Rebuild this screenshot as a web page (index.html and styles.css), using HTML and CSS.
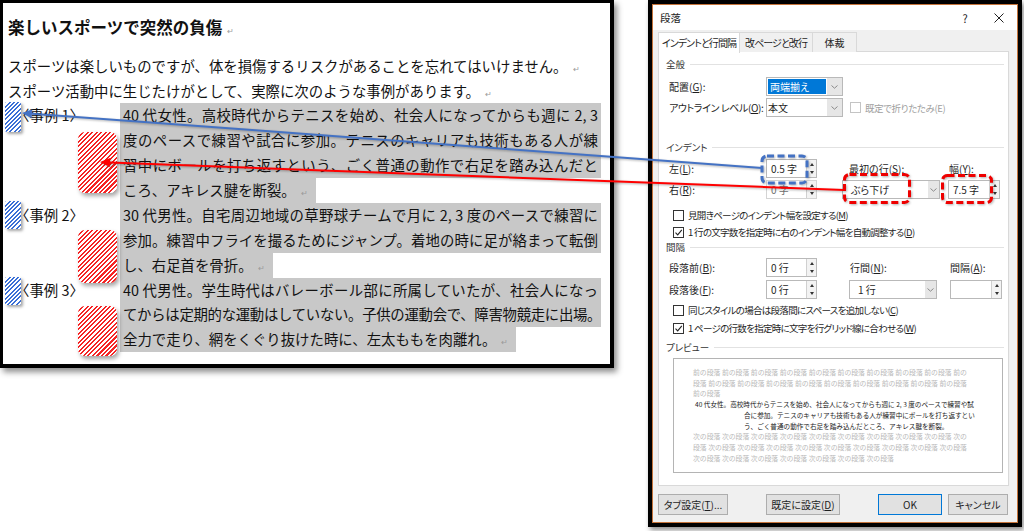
FILE: index.html
```html
<!DOCTYPE html>
<html lang="ja">
<head>
<meta charset="utf-8">
<link rel="stylesheet" href="styles.css">
</head>
<body>
<div class="stage">
  <section class="doc">
    <h1 class="doc-title">楽しいスポーツで突然の負傷<span class="pm">↵</span></h1>
    <p class="doc-line">スポーツは楽しいものですが、体を損傷するリスクがあることを忘れてはいけません。<span class="pm">↵</span></p>
    <p class="doc-line">スポーツ活動中に生じたけがとして、実際に次のような事例があります。<span class="pm">↵</span></p>
    <div class="case">
      <div class="case-label">〈事例 1〉</div>
      <div class="case-body">
        <div class="cl">40 代女性。高校時代からテニスを始め、社会人になってからも週に 2, 3</div>
        <div class="cl">度のペースで練習や試合に参加。テニスのキャリアも技術もある人が練</div>
        <div class="cl">習中にボールを打ち返すという、ごく普通の動作で右足を踏み込んだと</div>
        <div class="cl last">ころ、アキレス腱を断裂。<span class="pm">↵</span></div>
      </div>
    </div>
    <div class="case">
      <div class="case-label">〈事例 2〉</div>
      <div class="case-body">
        <div class="cl">30 代男性。自宅周辺地域の草野球チームで月に 2, 3 度のペースで練習に</div>
        <div class="cl">参加。練習中フライを撮るためにジャンプ。着地の時に足が絡まって転倒</div>
        <div class="cl last">し、右足首を骨折。<span class="pm">↵</span></div>
      </div>
    </div>
    <div class="case">
      <div class="case-label">〈事例 3〉</div>
      <div class="case-body">
        <div class="cl">40 代男性。学生時代はバレーボール部に所属していたが、社会人になっ</div>
        <div class="cl tight">てからは定期的な運動はしていない。子供の運動会で、障害物競走に出場。</div>
        <div class="cl last">全力で走り、網をくぐり抜けた時に、左太ももを肉離れ。<span class="pm">↵</span></div>
      </div>
    </div>
  </section>

  <section class="dialog">
    <div class="dialog-inner">
      <div class="titlebar">
        <span class="title">段落</span>
        <span class="tb-btn">?</span>
        <span class="tb-btn"><svg width="10" height="10" viewBox="0 0 10 10"><path d="M0.5 0.5L9.5 9.5M9.5 0.5L0.5 9.5" stroke="#222" stroke-width="1" fill="none"/></svg></span>
      </div>
      <div class="dbody">
        <div class="tabs">
          <div class="tab tab-active">インデントと行間隔</div>
          <div class="tab tab-2">改ページと改行</div>
          <div class="tab tab-3">体裁</div>
        </div>
        <div class="panel">
          <div class="sec s1">全般</div>
          <div class="row r-align">
            <span class="lbl">配置(<u>G</u>):</span>
            <div class="combo w77"><span class="combo-text"><span class="sel">両端揃え</span></span><span class="combo-arrow"><svg width="7" height="4" viewBox="0 0 7 4"><polyline points="0.5,0.5 3.5,3.2 6.5,0.5" fill="none" stroke="#8a8a8a" stroke-width="1"/></svg></span></div>
          </div>
          <div class="row r-outline">
            <span class="lbl kana">アウトライン レベル(<u>O</u>):</span>
            <div class="combo w77"><span class="combo-text">本文</span><span class="combo-arrow"><svg width="7" height="4" viewBox="0 0 7 4"><polyline points="0.5,0.5 3.5,3.2 6.5,0.5" fill="none" stroke="#8a8a8a" stroke-width="1"/></svg></span></div>
            <span class="cb cb-disabled"></span><span class="cb-text disabled">既定で折りたたみ(E)</span>
          </div>

          <div class="sec s2">インデント</div>
          <div class="row r-left">
            <span class="lbl">左(<u>L</u>):</span>
            <div class="spin"><span class="spin-text">0.5 字</span><span class="spinner"><span class="up"></span><span class="dn"></span></span></div>
            <span class="cell c3">最初の行(<u>S</u>):</span>
            <span class="cell c4">幅(<u>Y</u>):</span>
          </div>
          <div class="row r-right">
            <span class="lbl">右(<u>R</u>):</span>
            <div class="spin spin-dis"><span class="spin-text">0 字</span><span class="spinner"><span class="up"></span><span class="dn"></span></span></div>
            <div class="combo c3"><span class="combo-text pad8">ぶら下げ</span><span class="combo-arrow"><svg width="7" height="4" viewBox="0 0 7 4"><polyline points="0.5,0.5 3.5,3.2 6.5,0.5" fill="none" stroke="#8a8a8a" stroke-width="1"/></svg></span></div>
            <div class="spin c4"><span class="spin-text">7.5 字</span><span class="spinner"><span class="up"></span><span class="dn"></span></span></div>
          </div>
          <div class="cbrow cb-a"><span class="cb"></span><span class="cb-text">見開きページのインデント幅を設定する(<u>M</u>)</span></div>
          <div class="cbrow cb-b"><span class="cb"><svg width="9" height="9" viewBox="0 0 9 9"><polyline points="1.5,4.6 3.7,6.9 7.8,1.8" fill="none" stroke="#222" stroke-width="1.1"/></svg></span><span class="cb-text">1 行の文字数を指定時に右のインデント幅を自動調整する(<u>D</u>)</span></div>

          <div class="sec s3">間隔</div>
          <div class="row r-before">
            <span class="lbl">段落前(<u>B</u>):</span>
            <div class="spin"><span class="spin-text">0 行</span><span class="spinner"><span class="up"></span><span class="dn"></span></span></div>
            <span class="cell c5">行間(<u>N</u>):</span>
            <span class="cell c6">間隔(<u>A</u>):</span>
          </div>
          <div class="row r-after">
            <span class="lbl">段落後(<u>F</u>):</span>
            <div class="spin"><span class="spin-text">0 行</span><span class="spinner"><span class="up"></span><span class="dn"></span></span></div>
            <div class="combo c5"><span class="combo-text pad8">1 行</span><span class="combo-arrow"><svg width="7" height="4" viewBox="0 0 7 4"><polyline points="0.5,0.5 3.5,3.2 6.5,0.5" fill="none" stroke="#8a8a8a" stroke-width="1"/></svg></span></div>
            <div class="spin c6"><span class="spin-text"></span><span class="spinner"><span class="up"></span><span class="dn"></span></span></div>
          </div>
          <div class="cbrow cb-c"><span class="cb"></span><span class="cb-text">同じスタイルの場合は段落間にスペースを追加しない(<u>C</u>)</span></div>
          <div class="cbrow cb-d"><span class="cb"><svg width="9" height="9" viewBox="0 0 9 9"><polyline points="1.5,4.6 3.7,6.9 7.8,1.8" fill="none" stroke="#222" stroke-width="1.1"/></svg></span><span class="cb-text">1 ページの行数を指定時に文字を行グリッド線に合わせる(<u>W</u>)</span></div>

          <div class="sec s4">プレビュー</div>
          <div class="preview">
            <div class="pv-grey">前の段落 前の段落 前の段落 前の段落 前の段落 前の段落 前の段落 前の段落 前の段落 前の</div>
            <div class="pv-grey">段落 前の段落 前の段落 前の段落 前の段落 前の段落 前の段落 前の段落 前の段落 前の段落</div>
            <div class="pv-grey">前の段落</div>
            <div class="pv-main">40 代女性。高校時代からテニスを始め、社会人になってからも週に 2, 3 度のペースで練習や試</div>
            <div class="pv-main pv-hang">合に参加。テニスのキャリアも技術もある人が練習中にボールを打ち返すとい</div>
            <div class="pv-main pv-hang">う、ごく普通の動作で右足を踏み込んだところ、アキレス腱を断裂。</div>
            <div class="pv-grey">次の段落 次の段落 次の段落 次の段落 次の段落 次の段落 次の段落 次の段落 次の段落 次の</div>
            <div class="pv-grey">段落 次の段落 次の段落 次の段落 次の段落 次の段落 次の段落 次の段落 次の段落 次の段落</div>
            <div class="pv-grey">次の段落 次の段落 次の段落 次の段落 次の段落 次の段落 次の段落</div>
          </div>
        </div>
        <div class="buttons">
          <span class="btn b-tab">タブ設定(<u>T</u>)...</span>
          <span class="btn b-def">既定に設定(<u>D</u>)</span>
          <span class="btn b-ok">OK</span>
          <span class="btn b-cancel">キャンセル</span>
        </div>
      </div>
    </div>
  </section>

  <div class="hatch-blue hb1"></div>
  <div class="hatch-blue hb2"></div>
  <div class="hatch-blue hb3"></div>
  <div class="hatch-red hr1"></div>
  <div class="hatch-red hr2"></div>
  <div class="hatch-red hr3"></div>

  <svg class="annot" width="1024" height="531" viewBox="0 0 1024 531">
    <line x1="762" y1="168" x2="32" y2="113.7" stroke="#4472c4" stroke-width="2"/>
    <polygon points="22,113 32.3,109.2 31.6,118.2" fill="#4472c4"/>
    <line x1="844" y1="190" x2="110" y2="162.4" stroke="#ff0000" stroke-width="2"/>
    <polygon points="100,162 110.2,157.9 109.8,166.9" fill="#ff0000"/>
    <rect x="762" y="156" width="45" height="27" rx="5" fill="none" stroke="#4472c4" stroke-width="3" stroke-dasharray="7 3.5"/>
    <rect x="844.5" y="174.5" width="65" height="28" rx="5" fill="none" stroke="#ee0000" stroke-width="3" stroke-dasharray="7 3.5"/>
    <rect x="942.5" y="175.5" width="49" height="27" rx="5" fill="none" stroke="#ee0000" stroke-width="3" stroke-dasharray="7 3.5"/>
  </svg>
</div>
</body>
</html>
```

FILE: styles.css
```css
* { box-sizing: border-box; }
html, body { margin: 0; padding: 0; background: #fff; }
.stage {
  position: relative;
  width: 1024px;
  height: 531px;
  overflow: hidden;
  display: flex;
  align-items: flex-start;
}

/* ---------- document panel ---------- */
.doc {
  flex: none;
  width: 614px;
  height: 368px;
  border: 3px solid #000;
  border-right-width: 4px;
  border-bottom-width: 4px;
  background: #fff;
  box-shadow: 3px 4px 6px rgba(0,0,0,0.45);
  padding: 11px 0 0 5px;
  font-family: "Noto Sans CJK JP", sans-serif;
  color: #111;
}
.doc-title {
  margin: 0 0 14px;
  font-size: 16.5px;
  line-height: 26px;
  font-weight: 700;
}
.doc-line {
  margin: 0;
  font-size: 14.4px;
  line-height: 24.6px;
  white-space: nowrap;
}
.pm {
  font-size: 8px;
  line-height: 0;
  font-weight: 400;
  color: #9a9a9a;
  margin-left: 5px;
}
.case {
  display: grid;
  grid-template-columns: 112px 481px;
  font-size: 14.4px;
  line-height: 24.9px;
}
.case-label { white-space: nowrap; padding-left: 7px; }
.cl {
  padding: 0 3px;
  background: #c8c8c8;
  text-align: justify;
  text-align-last: justify;
}
.cl.last {
  width: fit-content;
  text-align-last: auto;
  padding-right: 8px;
}
.cl.tight { letter-spacing: -0.5px; padding-right: 0; }

/* ---------- hatched markers ---------- */
.hatch-blue {
  position: absolute;
  left: 5px;
  width: 16px;
  border-radius: 2px;
  background: repeating-linear-gradient(135deg, #3a6fd6 0 1.4px, #ffffff 1.4px 3px);
  box-shadow: 2px 2px 3px rgba(0,0,0,0.35);
}
.hb1 { top: 102px; height: 30px; }
.hb2 { top: 201px; height: 28px; }
.hb3 { top: 277px; height: 28px; }
.hatch-red {
  position: absolute;
  left: 78px;
  width: 39px;
  border-radius: 7px;
  background: repeating-linear-gradient(135deg, #f52424 0 1.5px, #ffffff 1.5px 3.2px);
  box-shadow: 2px 3px 4px rgba(0,0,0,0.35);
}
.hr1 { top: 132px; height: 61px; }
.hr2 { top: 230px; height: 53px; }
.hr3 { top: 306px; height: 50px; }

.annot {
  position: absolute;
  left: 0;
  top: 0;
  pointer-events: none;
  filter: drop-shadow(1px 1px 1px rgba(0,0,0,0.3));
}

/* ---------- dialog ---------- */
.dialog {
  flex: none;
  width: 374px;
  height: 527px;
  margin-left: 34px;
  border: 4px solid #000;
  box-shadow: 2px 3px 5px rgba(0,0,0,0.45);
  font-family: "Noto Sans CJK JP", sans-serif;
  font-size: 10px;
  font-feature-settings: "palt" 1;
  font-variant-east-asian: proportional-width;
  color: #1e1e1e;
}
.dialog-inner {
  height: 100%;
  border: 1px solid #c4733a;
  background: #f0f0f0;
  display: flex;
  flex-direction: column;
}
.titlebar {
  height: 25px;
  flex: none;
  background: #fff;
  display: flex;
  align-items: center;
  padding: 0 3px 0 7px;
}
.title { flex: 1; font-size: 10.5px; }
.tb-btn {
  width: 30px;
  height: 25px;
  display: flex;
  align-items: center;
  justify-content: center;
  font-size: 11px;
  color: #222;
}
.tb-btn + .tb-btn { margin-left: 4px; }

.dbody { padding: 2px 8px 0 5px; }
.tabs { display: flex; height: 20px; }
.tab {
  height: 20px;
  border: 1px solid #d9d9d9;
  border-bottom: none;
  background: #f0f0f0;
  text-align: center;
  line-height: 19px;
  white-space: nowrap;
  letter-spacing: -0.9px;
  overflow: hidden;
}
.tab-active { width: 82px; background: #fff; position: relative; z-index: 1; height: 21px; }
.tab-2 { width: 74px; margin-left: -1px; }
.tab-3 { width: 45px; margin-left: -1px; letter-spacing: 0; }

.panel {
  height: 435px;
  margin-top: -1px;
  background: #fff;
  border: 1px solid #d9d9d9;
  padding: 5px 4px 0 7px;
}
.sec {
  display: flex;
  align-items: center;
  height: 14px;
  font-size: 9.5px;
  color: #333;
  white-space: nowrap;
}
.sec::after {
  content: "";
  flex: 1;
  height: 1px;
  background: #e2e2e2;
  margin-left: 5px;
}
.s2 { margin-top: 23px; }
.s3 { margin-top: 1px; }
.s4 { margin-top: 5px; }

.row {
  display: flex;
  align-items: center;
  height: 19px;
  padding-left: 3px;
  white-space: nowrap;
}
.r-align { margin-top: 6px; }
.r-outline { margin-top: 2px; }
.r-left { margin-top: 5px; }
.r-right { margin-top: 2px; }
.r-before { margin-top: 4px; }
.r-after { margin-top: 3px; }
.lbl { width: 97px; flex: none; overflow: hidden; }
.lbl.kana { letter-spacing: -0.4px; }

.combo {
  display: flex;
  height: 19px;
  border: 1px solid #b9b9b9;
  background: #fff;
  flex: none;
}
.w77 { width: 77px; }
.combo-text {
  flex: 1;
  display: flex;
  align-items: center;
  padding: 1px;
}
.combo-text.pad8 { padding-left: 8px; }
.sel {
  display: flex;
  align-items: center;
  width: 100%;
  height: 100%;
  padding-left: 2px;
  background: #0078d7;
  color: #fff;
}
.combo-arrow {
  width: 15px;
  flex: none;
  background: #e6e6e6;
  display: flex;
  align-items: center;
  justify-content: center;
}
.combo.c3 .combo-arrow, .combo.c5 .combo-arrow { width: 11px; }

.spin {
  display: flex;
  width: 51px;
  height: 19px;
  flex: none;
  border: 1px solid #b9b9b9;
  background: #fff;
}
.spin-text {
  flex: 1;
  display: flex;
  align-items: center;
  padding-left: 4px;
}
.spin-dis { border-color: #d4d4d4; }
.spin-dis .spin-text { color: #707070; }
.spinner {
  width: 10px;
  flex: none;
  border-left: 1px solid #d0d0d0;
  background: #f3f3f3;
  display: flex;
  flex-direction: column;
}
.up, .dn {
  flex: 1;
  display: flex;
  align-items: center;
  justify-content: center;
}
.up::before {
  content: "";
  border-left: 2.5px solid transparent;
  border-right: 2.5px solid transparent;
  border-bottom: 3px solid #333;
}
.dn::before {
  content: "";
  border-left: 2.5px solid transparent;
  border-right: 2.5px solid transparent;
  border-top: 3px solid #333;
}

.cell { flex: none; }
.c3 { margin-left: 25px; width: 98px; }
.cell.c3 { padding-left: 7px; }
.c4 { margin-left: 8px; width: 52px; }
.cell.c4 { padding-left: 1px; }
.c5 { margin-left: 32px; width: 88px; }
.cell.c5 { padding-left: 1px; }
.c6 { margin-left: 13px; width: 52px; }
.cell.c6 { padding-left: 0; }

.cb {
  width: 11px;
  height: 11px;
  flex: none;
  border: 1px solid #333;
  background: #fff;
  display: flex;
  align-items: center;
  justify-content: center;
}
.r-outline .cb { margin-left: 7px; }
.cb-disabled { border-color: #c4c4c4; }
.cb-text { margin-left: 4px; white-space: nowrap; font-size: 9.5px; letter-spacing: -0.7px; }
.cb-text.disabled { color: #a0a0a0; letter-spacing: -0.4px; }
.cbrow {
  display: flex;
  align-items: center;
  height: 14px;
  padding-left: 7px;
}
.cb-a { margin-top: 9px; }
.cb-b { margin-top: 3px; }
.cb-c { margin-top: 4px; }
.cb-d { margin-top: 4px; }

.preview {
  margin: 4px 0 0 7px;
  width: 330px;
  height: 115px;
  border: 1px solid #b4b4b4;
  background: #fff;
  padding: 8px 0 0 19px;
  font-feature-settings: normal;
  font-variant-east-asian: normal;
  font-size: 6.85px;
  line-height: 10.7px;
  white-space: nowrap;
}
.pv-grey { color: #b8b8b8; }
.pv-main { color: #1a1a1a; font-size: 6.6px; padding-left: 2px; }
.pv-main.pv-hang { padding-left: 51px; }

.buttons {
  display: flex;
  margin-top: 8px;
  height: 21px;
}
.btn {
  height: 21px;
  border: 1px solid #adadad;
  background: #e1e1e1;
  display: flex;
  align-items: center;
  justify-content: center;
  white-space: nowrap;
  flex: none;
}
.b-tab { width: 70px; }
.b-def { width: 74px; margin-left: 38px; }
.b-ok { width: 64px; margin-left: 38px; border-color: #0078d7; }
.b-cancel { width: 60px; margin-left: 6px; }
```
